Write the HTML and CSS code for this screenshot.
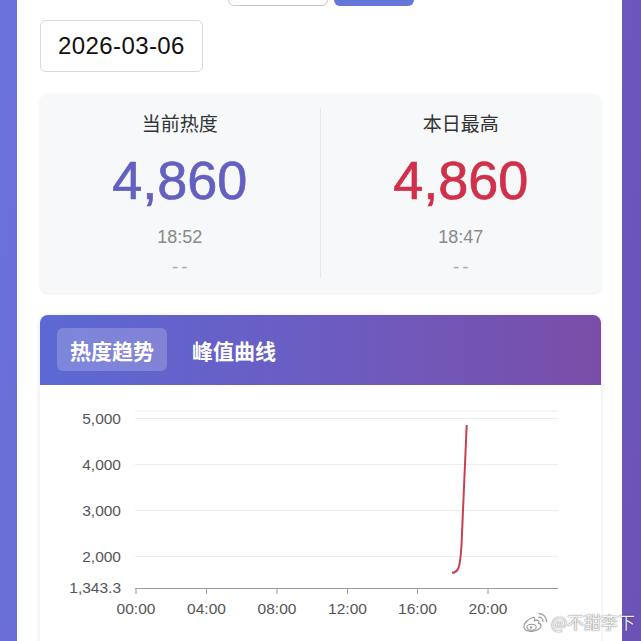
FILE: index.html
```html
<!DOCTYPE html>
<html lang="zh-CN">
<head>
<meta charset="utf-8">
<title>热度</title>
<link rel="stylesheet" href="styles.css">
</head>
<body>
<div class="panel">
  <div class="btn-row">
    <div class="btn btn-outline"></div>
    <div class="btn btn-primary"></div>
  </div>
  <div class="date-box">2026-03-06</div>
  <div class="stats">
    <div class="stat stat-first">
      <div class="stat-label">当前热度</div>
      <div class="stat-value value-blue">4,860</div>
      <div class="stat-time">18:52</div>
      <div class="stat-dash">--</div>
    </div>
    <div class="stat">
      <div class="stat-label">本日最高</div>
      <div class="stat-value value-red">4,860</div>
      <div class="stat-time">18:47</div>
      <div class="stat-dash">--</div>
    </div>
  </div>
  <div class="chart-card">
    <div class="tabs">
      <div class="tab tab-active">热度趋势</div>
      <div class="tab">峰值曲线</div>
    </div>
    <div class="chart-body">
      <svg class="chart" width="561" height="256" viewBox="0 0 561 256">
        <g class="grid">
          <line x1="95" y1="26" x2="518" y2="26"/>
          <line x1="95" y1="33.5" x2="518" y2="33.5"/>
          <line x1="95" y1="79.5" x2="518" y2="79.5"/>
          <line x1="95" y1="125.5" x2="518" y2="125.5"/>
          <line x1="95" y1="171.5" x2="518" y2="171.5"/>
        </g>
        <g class="axis">
          <line x1="95" y1="203.5" x2="518" y2="203.5"/>
          <line x1="96" y1="203" x2="96" y2="209"/>
          <line x1="166.5" y1="203" x2="166.5" y2="209"/>
          <line x1="237" y1="203" x2="237" y2="209"/>
          <line x1="307.5" y1="203" x2="307.5" y2="209"/>
          <line x1="377.5" y1="203" x2="377.5" y2="209"/>
          <line x1="448" y1="203" x2="448" y2="209"/>
        </g>
        <g class="ylabels">
          <text x="81" y="39">5,000</text>
          <text x="81" y="85">4,000</text>
          <text x="81" y="131">3,000</text>
          <text x="81" y="177">2,000</text>
          <text x="81" y="208">1,343.3</text>
        </g>
        <g class="xlabels">
          <text x="96" y="229">00:00</text>
          <text x="166.5" y="229">04:00</text>
          <text x="237" y="229">08:00</text>
          <text x="307.5" y="229">12:00</text>
          <text x="377.5" y="229">16:00</text>
          <text x="448" y="229">20:00</text>
        </g>
        <path class="series" d="M412 188 C415 187.5 417 186.5 418.5 183 C420 179 421 168 421.5 160 L426.7 40"/>
      </svg>
    </div>
  </div>
</div>
<div class="watermark">
  <svg class="wb-logo" width="26" height="21" viewBox="0 0 26 21">
    <path d="M10.5 5.5 C5.5 7.5 1.2 11.5 2 15.3 C3 19.5 11 20.6 16.2 17.6 C20.2 15.2 19.8 11.6 16.6 11.4 C17.8 8.6 15.8 7.4 12.4 8.8 C13.2 5.8 12.4 5 10.5 5.5 Z" fill="#fff" stroke="#9a9a9a" stroke-width="1.2"/>
    <ellipse cx="9.6" cy="15.2" rx="4.6" ry="3" fill="none" stroke="#9a9a9a" stroke-width="1.1"/>
    <circle cx="9" cy="15.4" r="1.2" fill="#9a9a9a"/>
    <path d="M16.8 5.2 A4.2 4.2 0 0 1 21 9.4" fill="none" stroke="#9a9a9a" stroke-width="1.3" stroke-linecap="round"/>
    <path d="M16.8 1.6 A7.8 7.8 0 0 1 24.6 9.4" fill="none" stroke="#9a9a9a" stroke-width="1.3" stroke-linecap="round"/>
  </svg>
  <span class="wb-text">@不甜李下</span>
</div>
</body>
</html>
```
FILE: styles.css
```css
html, body {
  margin: 0;
  padding: 0;
}
body {
  width: 641px;
  height: 641px;
  overflow: hidden;
  position: relative;
  background: linear-gradient(100deg, #6a73dc 0%, #6b63cc 50%, #6c52b6 100%);
  font-family: "Liberation Sans", "Noto Sans CJK SC", sans-serif;
}
.panel {
  margin-left: 17px;
  width: 605px;
  min-height: 700px;
  box-sizing: border-box;
  padding: 0 21px 0 23px;
  background: #ffffff;
}
.btn-row {
  display: flex;
  justify-content: center;
  gap: 6px;
  margin-top: -30px;
}
.btn {
  height: 36px;
  border-radius: 6px;
  box-sizing: border-box;
}
.btn-outline {
  width: 100px;
  border: 1px solid #c8c8cc;
  background: #fff;
}
.btn-primary {
  width: 80px;
  background: #6576db;
}
.date-box {
  margin-top: 14px;
  width: 163px;
  height: 52px;
  box-sizing: border-box;
  border: 1px solid #d8d8da;
  border-radius: 6px;
  padding-left: 17px;
  display: flex;
  align-items: center;
  font-size: 24px;
  letter-spacing: 0.4px;
  color: #111;
}
.stats {
  margin-top: 22px;
  height: 199px;
  box-sizing: border-box;
  background: #f6f8f9;
  border-radius: 8px;
  box-shadow: 0 1px 3px rgba(0, 0, 0, 0.08);
  padding: 14px 0 18px;
  display: grid;
  grid-template-columns: 1fr 1fr;
}
.stat {
  display: flex;
  flex-direction: column;
  align-items: center;
  padding-top: 3px;
}
.stat-first {
  border-right: 1px solid #e6e8ea;
}
.stat-label {
  font-family: "Noto Sans CJK SC", sans-serif;
  font-size: 19px;
  line-height: 24px;
  color: #333;
}
.stat-value {
  margin-top: 15px;
  font-size: 54px;
  line-height: 60px;
  -webkit-text-stroke: 0.7px currentColor;
}
.value-blue {
  color: #6460c0;
}
.value-red {
  color: #d0304a;
}
.stat-time {
  margin-top: 16px;
  font-size: 18px;
  line-height: 22px;
  color: #8a8a8a;
}
.stat-dash {
  margin-top: 8px;
  font-size: 19px;
  line-height: 22px;
  letter-spacing: 3px;
  padding-left: 3px;
  color: #aaa;
}
.chart-card {
  margin-top: 22px;
  border-radius: 8px 8px 0 0;
  overflow: hidden;
  background: #fff;
  box-shadow: 0 1px 5px rgba(0, 0, 0, 0.1);
}
.tabs {
  height: 70px;
  box-sizing: border-box;
  padding: 13px 17px;
  display: flex;
  gap: 12px;
  background: linear-gradient(90deg, #5c69d4 0%, #6d5bbf 55%, #7a4ea8 100%);
}
.tab {
  height: 43px;
  padding: 0 13px;
  display: flex;
  align-items: center;
  border-radius: 6px;
  font-family: "Noto Sans CJK SC", sans-serif;
  font-weight: 700;
  font-size: 21px;
  color: #fff;
}
.tab-active {
  background: rgba(255, 255, 255, 0.2);
}
.chart-body {
  height: 300px;
}
.chart {
  display: block;
}
.grid line {
  stroke: #eeeeee;
  stroke-width: 1;
}
.axis line {
  stroke: #9a9a9a;
  stroke-width: 1;
}
.ylabels text {
  font-family: "Liberation Sans", sans-serif;
  font-size: 15.5px;
  fill: #555;
  text-anchor: end;
}
.xlabels text {
  font-family: "Liberation Sans", sans-serif;
  font-size: 15.5px;
  fill: #555;
  text-anchor: middle;
}
.series {
  fill: none;
  stroke: #c9404f;
  stroke-width: 2;
}
.watermark {
  position: absolute;
  right: 6px;
  top: 611px;
  display: flex;
  align-items: center;
  gap: 3px;
  white-space: nowrap;
}
.wb-text {
  font-family: "Noto Sans CJK SC", sans-serif;
  font-size: 17px;
  line-height: 22px;
  color: rgba(255, 255, 255, 0.92);
  text-shadow: 0 0 1px rgba(0, 0, 0, 0.55), 0 0 2px rgba(0, 0, 0, 0.3);
}
```
